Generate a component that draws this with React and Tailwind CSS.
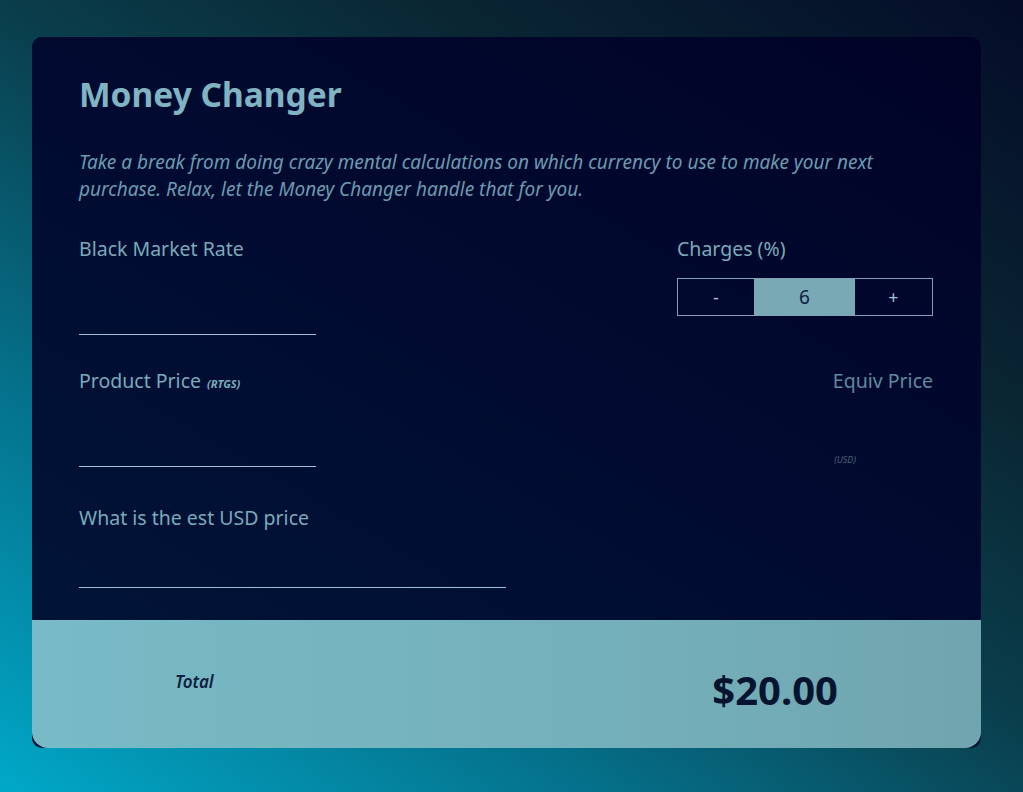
const Field = ({ label, extra, width, gap }) => (
  <div className="flex flex-col">
    <label className="text-[19.5px] leading-[26px] text-[#7aaabb]">
      {label}
      {extra && (
        <span className="ml-1.5 text-[11px] leading-none font-bold italic text-[#7aaabb]">{extra}</span>
      )}
    </label>
    <input
      type="text"
      className={`${width} ${gap} h-[26px] border-b border-[#9dc0d6] bg-transparent text-[#9dc0d6] outline-none`}
    />
  </div>
);

export default function App() {
  return (
    <div className="min-h-[792px] bg-[linear-gradient(35deg,#01a8c8_0%,#05708a_28%,#0a3e4c_52%,#0a2633_72%,#040c28_100%)] pt-[37px] pb-11 pl-8 font-['Noto_Sans',sans-serif]">
      <div className="flex h-[711px] w-[949px] flex-col overflow-hidden rounded-[10px] bg-[#031030]">
        <div className="flex flex-1 flex-col bg-[linear-gradient(30deg,#011438_0%,#010a30_50%,#010326_100%)] pt-[34px] pr-12 pl-[47px]">
          <h1 className="text-[33.5px] leading-[46px] font-bold text-[#80b4c2]">Money Changer</h1>
          <p className="mt-[32px] text-[19px] leading-[27px] italic text-[#6c9bb0]">
            Take a break from doing crazy mental calculations on which currency to use to make your next purchase. Relax, let the Money Changer handle that for you.
          </p>

          <div className="mt-[33px] flex justify-between">
            <Field label="Black Market Rate" width="w-[237px]" gap="mt-[47px]" />
            <div className="flex w-[256px] flex-col">
              <span className="text-[19.5px] leading-[26px] text-[#7aaabb]">Charges (%)</span>
              <div className="mt-[16px] flex h-[38px] border border-[#7f9fba]">
                <button className="w-[76px] text-[18px] text-[#9cc3d3]">-</button>
                <div className="flex flex-1 items-center justify-center bg-[#78a9b5] text-[19px] text-[#0d2040]">6</div>
                <button className="w-[77px] text-[18px] text-[#9cc3d3]">+</button>
              </div>
            </div>
          </div>

          <div className="mt-[33px] flex justify-between">
            <Field label="Product Price" extra="(RTGS)" width="w-[237px]" gap="mt-[47px]" />
            <div className="flex flex-col items-end">
              <span className="text-[19.5px] leading-[26px] text-[#5f8aa0]">Equiv Price</span>
              <span className="mt-[59px] mr-[77px] text-[9px] italic text-[#4a6478]">(USD)</span>
            </div>
          </div>

          <div className="mt-[38px]">
            <Field label="What is the est USD price" width="w-[427px]" gap="mt-[31px]" />
          </div>
        </div>

        <div className="flex h-[128px] shrink-0 items-center rounded-b-[16px] bg-[linear-gradient(90deg,#78bac6_0%,#74b0bb_60%,#70a5af_100%)] pt-3 pr-[143px] pl-[143px]">
          <span className="-mt-4 text-[17px] font-semibold italic text-[#0d2040]">Total</span>
          <span className="ml-auto text-[40px] font-bold text-[#071430]">$20.00</span>
        </div>
      </div>
    </div>
  );
}
